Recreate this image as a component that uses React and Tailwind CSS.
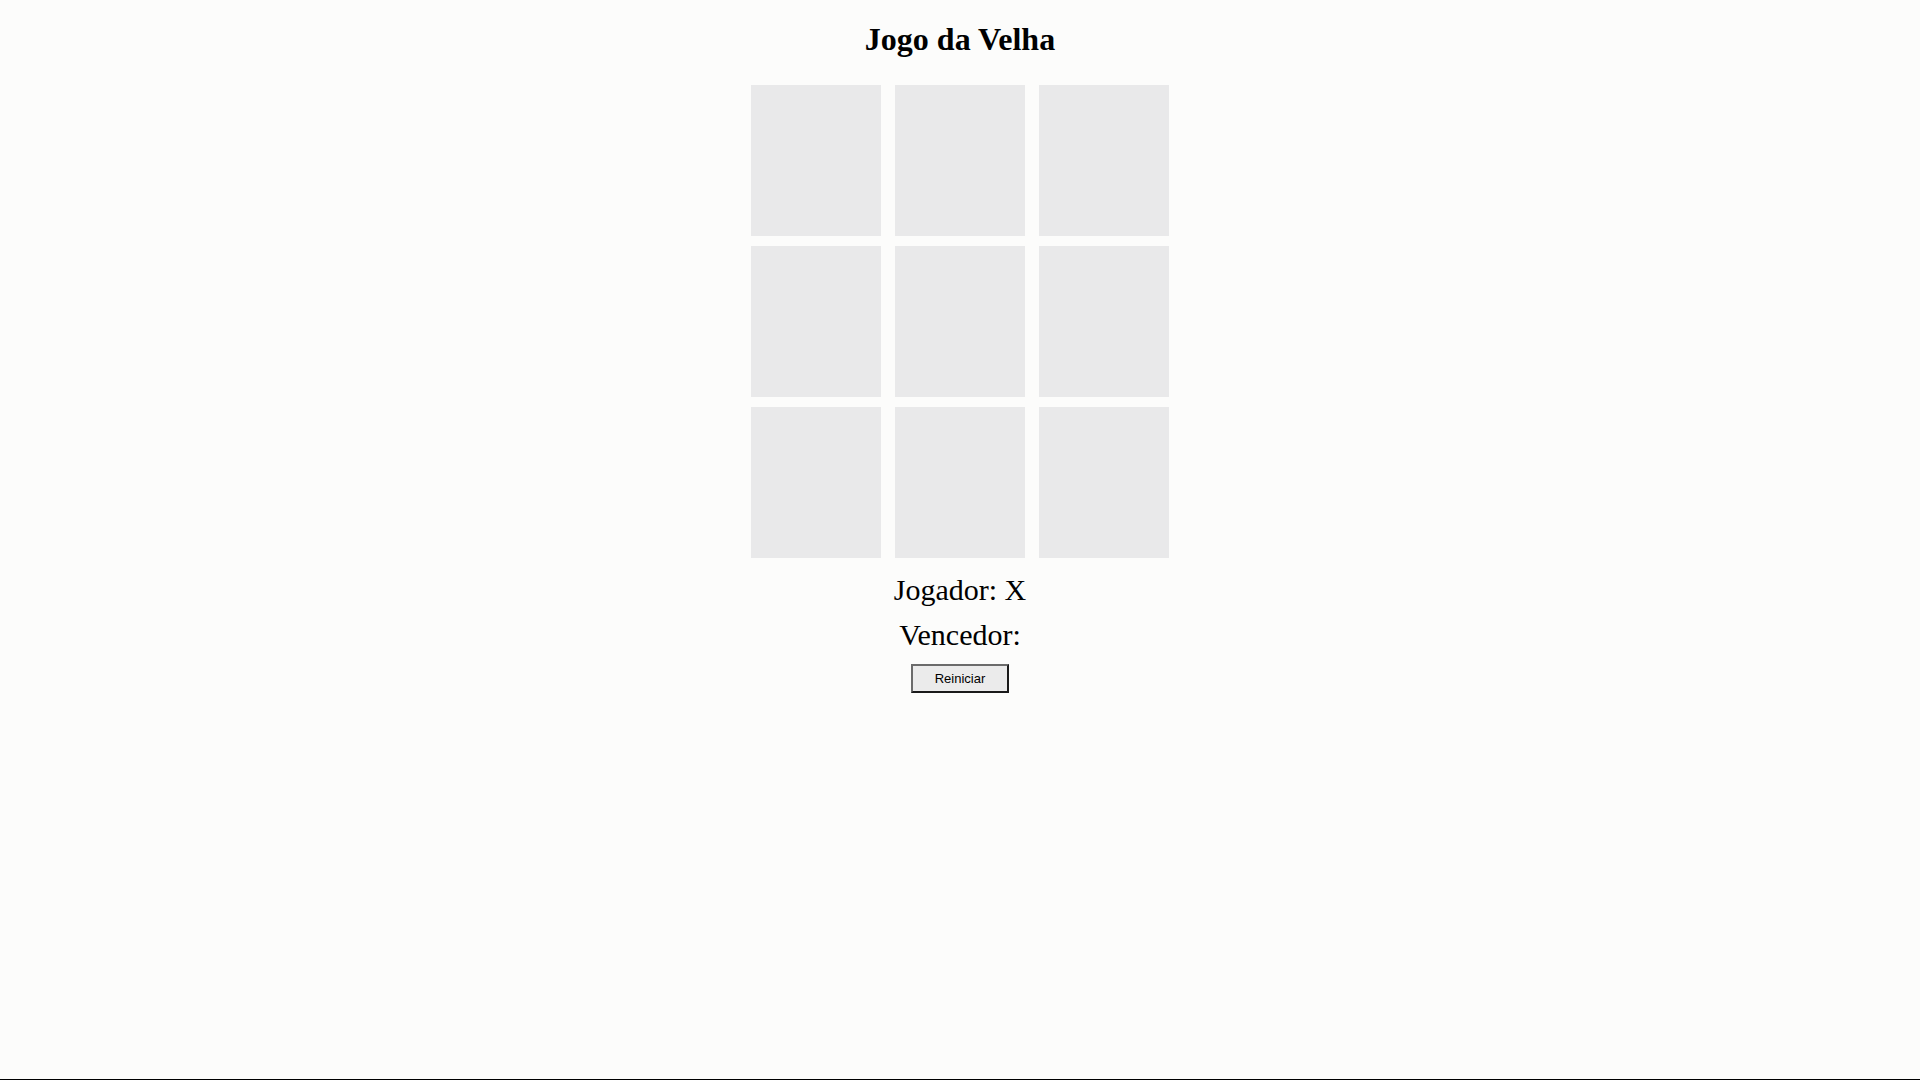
import { useState } from 'react';

export default function App() {
    const [celulas, setCelulas] = useState(Array(9).fill(''));
    const [jogador, setJogador] = useState('X');
    const [vencedor, setVencedor] = useState('');

    const jogar = (i) => {
        if (celulas[i] || vencedor) return;
        const novas = [...celulas];
        novas[i] = jogador;
        setCelulas(novas);
        setJogador(jogador === 'X' ? 'O' : 'X');
    };

    const reiniciar = () => {
        setCelulas(Array(9).fill(''));
        setJogador('X');
        setVencedor('');
    };

    return (
        <div className="min-h-screen bg-[#fcfcfb] border-b border-black flex flex-col items-center text-black font-['Liberation_Serif',serif]">
            {/* Título */}
            <h1 className="mt-[21px] text-[32px] leading-[37px] font-bold">Jogo da Velha</h1>

            {/* Tabuleiro */}
            <div className="mt-[27px] grid grid-cols-[repeat(3,130px)] gap-x-[14px] gap-y-[10px]">
                {celulas.map((c, i) => (
                    <div
                        key={i}
                        onClick={() => jogar(i)}
                        className="h-[151px] bg-[#e9e9ea] flex items-center justify-center text-[80px] cursor-pointer"
                    >
                        {c}
                    </div>
                ))}
            </div>

            {/* Status */}
            <p className="mt-[14px] text-[30px] leading-[35px]">Jogador: {jogador}</p>
            <p className="mt-[10px] text-[30px] leading-[35px]">Vencedor: {vencedor}</p>

            {/* Botão */}
            <button
                onClick={reiniciar}
                className="mt-[12px] w-[98px] h-[29px] bg-[#ebebeb] border-2 border-t-[#6b6b6b] border-l-[#6b6b6b] border-b-[#1a1a1a] border-r-[#1a1a1a] text-[13px] font-['Liberation_Sans',sans-serif] text-black"
            >
                Reiniciar
            </button>
        </div>
    );
}
